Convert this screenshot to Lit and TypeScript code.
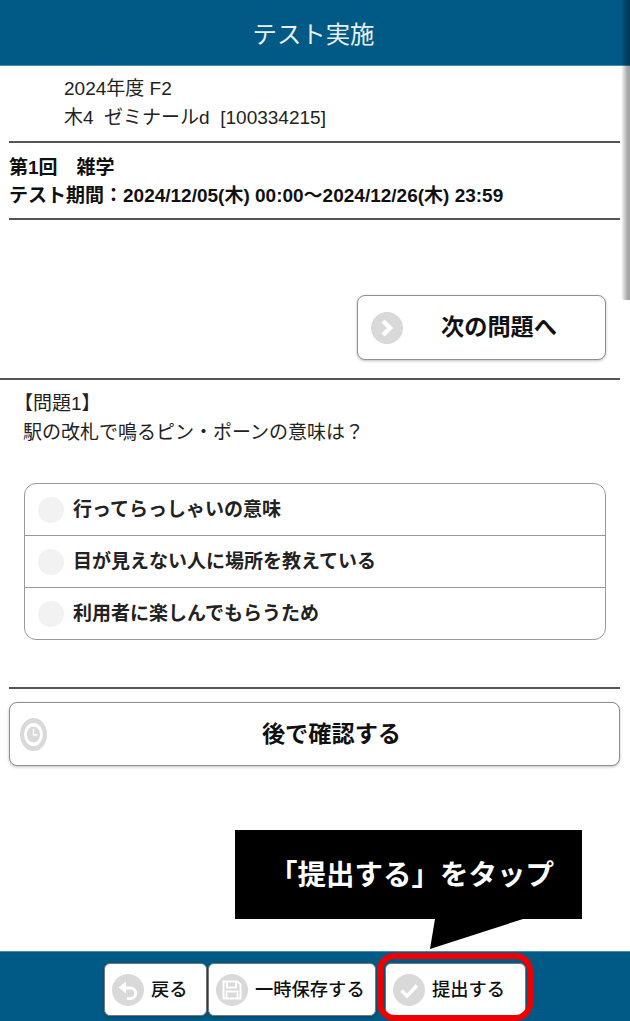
import { LitElement, html, css } from "lit";
import { customElement } from "lit/decorators.js";

const iconNext = html`<svg viewBox="0 0 32 32"><circle cx="16" cy="16" r="16" fill="#d9d9d9"/><path d="M12 9l7 7-7 7" fill="none" stroke="#fff" stroke-width="4.5"/></svg>`;
const iconClock = html`<svg viewBox="0 0 32 32" preserveAspectRatio="none"><circle cx="16" cy="16" r="16" fill="#d9d9d9"/><circle cx="16" cy="16" r="9.5" fill="none" stroke="#fff" stroke-width="3.4"/><path d="M16 10.5V16.5H20.5" fill="none" stroke="#fff" stroke-width="1.6"/></svg>`;
const iconBack = html`<svg viewBox="0 0 32 32"><circle cx="16" cy="16" r="16" fill="#d9d9d9"/><path d="M12 14h6.5a5.2 5.2 0 0 1 0 10.4H15" fill="none" stroke="#fff" stroke-width="3"/><path d="M14 7.5v12L6.5 13.5z" fill="#fff"/></svg>`;
const iconSave = html`<svg viewBox="0 0 32 32"><circle cx="16" cy="16" r="16" fill="#d9d9d9"/><path d="M7.5 7.5h14l3 3v14h-17z" fill="none" stroke="#fff" stroke-width="2"/><path d="M11 8v5.5h9V8M10.5 24v-6.5h11V24" fill="none" stroke="#fff" stroke-width="1.8"/></svg>`;
const iconCheck = html`<svg viewBox="0 0 32 32"><circle cx="16" cy="16" r="16" fill="#d9d9d9"/><path d="M8.5 16.5l5.5 5.5L24 11.5" fill="none" stroke="#fff" stroke-width="3.4"/></svg>`;

@customElement("app-root")
export class AppRoot extends LitElement {
  static styles = css`
    :host {
      display: block;
      position: relative;
      width: 630px;
      height: 1021px;
      overflow: hidden;
      background: #fff;
      color: #111;
      font-family: "Liberation Sans", "Noto Sans CJK JP", sans-serif;
    }
    .page {
      display: flex;
      flex-direction: column;
      height: 100%;
    }
    .header {
      height: 65px;
      flex: none;
      border-bottom: 1px solid #3d8fb8;
      background: #015a85;
      color: #e9f0f4;
      font-size: 24.4px;
      display: flex;
      align-items: center;
      justify-content: center;
      padding-right: 3px;
    }
    .course {
      height: 75px;
      flex: none;
      box-sizing: border-box;
      padding: 9px 0 0 64px;
      font-size: 19px;
      line-height: 28px;
      color: #222;
    }
    .course div + div { padding-top: 1px; }
    .rule {
      flex: none;
      height: 2px;
      background: #555;
      margin: 0 10px 0 9px;
    }
    .rule.full { margin-left: 0; }
    .period {
      height: 75px;
      flex: none;
      box-sizing: border-box;
      padding: 11px 0 0 9px;
      font-size: 19px;
      font-weight: 700;
      line-height: 28px;
    }
    .next-row {
      flex: none;
      display: flex;
      justify-content: flex-end;
      padding: 75px 24px 18px 0;
    }
    .btn {
      box-sizing: border-box;
      display: flex;
      align-items: center;
      background: #fff;
      border: 1.5px solid #8f8f8f;
      border-radius: 8px;
      box-shadow: 0 1px 3px rgba(0, 0, 0, 0.25);
      font-weight: 700;
      font-size: 23.2px;
      color: #111;
    }
    .btn svg { flex: none; display: block; }
    .next {
      width: 249px;
      height: 65px;
      padding-left: 13px;
    }
    .next svg { width: 32px; height: 32px; }
    .next span { flex: 1; text-align: center; padding: 0 10px 6px 0; }
    .question {
      flex: none;
      height: 103px;
      box-sizing: border-box;
      padding: 10px 0 0 14px;
      font-size: 19px;
      line-height: 28px;
      color: #222;
    }
    .question div + div { padding: 1px 0 0 9px; }
    .choices {
      flex: none;
      box-sizing: border-box;
      margin-left: 24px;
      width: 582px;
      height: 157px;
      border: 1.5px solid #999;
      border-radius: 12px;
      display: flex;
      flex-direction: column;
    }
    .choice {
      flex: 1;
      display: flex;
      align-items: center;
      gap: 9px;
      padding-left: 13px;
      font-size: 19px;
      font-weight: 700;
      color: #222;
    }
    .choice span { padding-bottom: 4px; }
    .choice + .choice { border-top: 1.5px solid #999; }
    .dot {
      width: 26px;
      height: 26px;
      border-radius: 50%;
      background: #f2f2f2;
      flex: none;
    }
    .later-gap { height: 47px; flex: none; }
    .later-row {
      flex: none;
      padding: 13px 10px 0 9px;
    }
    .later {
      height: 64px;
      padding-left: 10px;
    }
    .later svg { width: 27px; height: 33px; }
    .later span { flex: 1; text-align: center; padding: 0 3px 5px 0; }
    .spacer { flex: 1; }
    .footer {
      flex: none;
      height: 70px;
      box-sizing: border-box;
      border-top: 1px solid #3d8fb8;
      background: #015a85;
      display: flex;
      align-items: flex-start;
      padding: 11px 0 0 104px;
      gap: 1px;
    }
    .fbtn {
      height: 53px;
      font-size: 18.3px;
      font-weight: 500;
      padding-left: 7px;
      gap: 7px;
      border-radius: 6px;
      border: 1.5px solid #777;
    }
    .fbtn span { padding-bottom: 3px; }
    .fbtn svg { width: 32px; height: 32px; }
    .back { width: 103px; }
    .save { width: 168px; }
    .submit {
      width: 141px;
      margin-left: 8px;
      gap: 7px;
      padding-left: 7px;
      position: relative;
    }
    .highlight {
      position: absolute;
      left: -9px;
      right: -8px;
      top: -11px;
      bottom: -6px;
      border: 6px solid #ee0000;
      border-radius: 18px;
      pointer-events: none;
    }
    .callout {
      position: absolute;
      left: 235px;
      top: 830px;
      width: 347px;
      height: 89px;
      background: #000;
      color: #fff;
      font-size: 28.5px;
      font-weight: 700;
      display: flex;
      align-items: center;
      justify-content: center;
      padding: 0 0 4px 6px;
      box-sizing: border-box;
    }
    .tail {
      position: absolute;
      left: 195px;
      top: 89px;
      width: 95px;
      height: 30px;
      display: block;
    }
    .edge {
      position: absolute;
      top: 0;
      right: 0;
      width: 9px;
      height: 300px;
      background: linear-gradient(to right, rgba(0, 0, 0, 0), rgba(0, 0, 0, 0.34) 70%, rgba(0, 0, 0, 0.36));
      border-bottom-left-radius: 4px;
      pointer-events: none;
    }
  `;

  render() {
    return html`
      <div class="page">
        <div class="header">テスト実施</div>
        <div class="course">
          <div>2024年度 F2</div>
          <div>木4&nbsp; ゼミナールd&nbsp; [100334215]</div>
        </div>
        <div class="rule"></div>
        <div class="period">
          <div>第1回　雑学</div>
          <div>テスト期間：2024/12/05(木) 00:00～2024/12/26(木) 23:59</div>
        </div>
        <div class="rule"></div>
        <div class="next-row">
          <div class="btn next">${iconNext}<span>次の問題へ</span></div>
        </div>
        <div class="rule full"></div>
        <div class="question">
          <div>【問題1】</div>
          <div>駅の改札で鳴るピン・ポーンの意味は？</div>
        </div>
        <div class="choices">
          <div class="choice"><i class="dot"></i><span>行ってらっしゃいの意味</span></div>
          <div class="choice"><i class="dot"></i><span>目が見えない人に場所を教えている</span></div>
          <div class="choice"><i class="dot"></i><span>利用者に楽しんでもらうため</span></div>
        </div>
        <div class="later-gap"></div>
        <div class="rule"></div>
        <div class="later-row">
          <div class="btn later">${iconClock}<span>後で確認する</span></div>
        </div>
        <div class="spacer"></div>
        <div class="footer">
          <div class="btn fbtn back">${iconBack}<span>戻る</span></div>
          <div class="btn fbtn save">${iconSave}<span>一時保存する</span></div>
          <div class="btn fbtn submit">${iconCheck}<span>提出する</span><i class="highlight"></i></div>
        </div>
      </div>
      <div class="edge"></div>
      <div class="callout">
        「提出する」をタップ
        <svg class="tail" viewBox="0 0 95 30"><path d="M5 0L0 30 93 0z" fill="#000"/></svg>
      </div>
    `;
  }
}
